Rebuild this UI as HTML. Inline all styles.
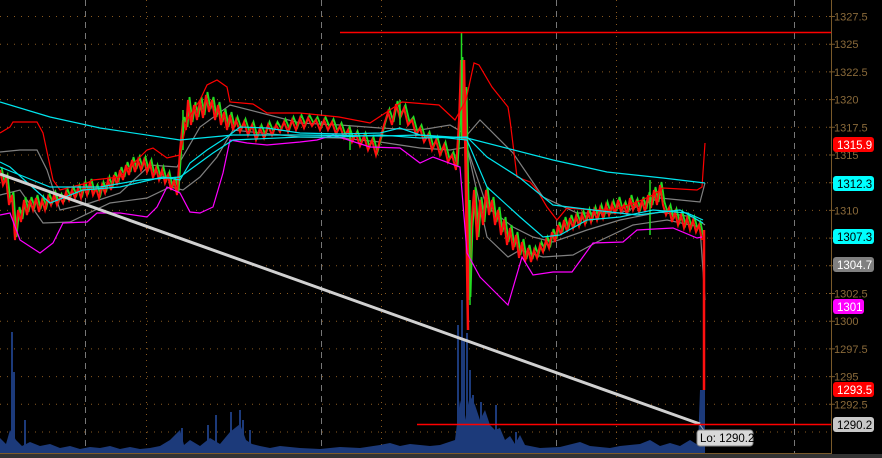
<!DOCTYPE html>
<html><head><meta charset="utf-8">
<style>
html,body{margin:0;padding:0;background:#000;width:882px;height:458px;overflow:hidden}
svg{display:block}
text{font-family:"Liberation Sans",sans-serif}
</style></head><body>
<svg width="882" height="458" xmlns="http://www.w3.org/2000/svg">
<defs>
<polyline id="pr" fill="none" points="0,170 3,185 6,178 9,205 12,195 15,240 18,210 21,222 24,200 27,215 30,200 33,210 36,198 39,212 42,200 45,210 48,197 51,205 54,195 57,205 60,197 63,203 66,192 69,200 72,190 75,198 78,188 81,198 84,185 87,195 90,182 93,195 96,188 99,198 102,185 105,193 108,180 111,190 114,175 117,185 120,170 123,180 126,165 129,175 132,160 135,172 138,160 141,170 144,160 147,172 150,163 153,178 156,168 159,180 162,170 165,183 168,175 171,190 174,180 177,195 180,150 183,120 186,130 188,100 191,125 194,105 197,120 200,100 203,118 206,95 209,112 212,100 215,120 218,105 221,125 224,112 227,130 230,115 233,130 236,120 240,132 244,122 248,135 252,125 256,140 260,128 264,138 268,125 272,135 276,125 280,132 284,122 288,132 292,120 296,130 300,118 304,128 308,118 312,126 316,120 320,130 324,120 328,130 332,122 336,134 340,126 344,138 348,130 352,142 356,134 360,146 364,136 368,150 372,140 376,155 380,140 384,125 388,112 392,125 396,104 400,118 404,108 408,125 412,120 416,135 420,128 424,142 428,135 432,150 436,140 440,155 444,145 448,162 452,155 456,170 459,120 461,60 463,140 465,90 467,200 469,300 471,230 474,190 477,240 480,200 483,225 486,190 489,215 492,200 495,225 498,210 501,235 504,220 507,245 510,228 513,250 516,235 519,258 522,242 525,262 528,248 531,262 534,250 537,258 540,245 543,252 546,240 549,248 552,232 555,242 558,225 561,235 564,220 567,232 570,218 573,228 576,216 579,226 582,214 585,224 588,212 591,222 594,210 597,220 600,208 603,218 606,205 609,215 612,204 615,214 618,200 621,212 624,205 627,215 630,198 633,210 636,202 639,212 642,200 645,212 648,195 651,208 654,190 657,205 660,185 663,205 666,215 669,208 672,222 675,212 678,225 681,215 684,228 687,218 690,230 693,220 696,232 699,225 702,240"/>
</defs>
<rect width="882" height="458" fill="#000"/>
<g fill="none">
<path d="M85.5 0V453M321.5 0V453M556.5 0V453M794.5 0V453" stroke="#777" stroke-dasharray="6,5"/>
<path d="M146.5 0V453M381.5 0V453M616.5 0V453" stroke="#8a5a20" stroke-dasharray="1,5"/>
<path d="M0 16.5H831M0 44.2H831M0 71.9H831M0 99.6H831M0 127.3H831M0 155H831M0 182.7H831M0 210.4H831M0 238.1H831M0 265.8H831M0 293.5H831M0 321.2H831M0 348.9H831M0 376.6H831M0 404.3H831M0 432H831" stroke="#8a5a20" stroke-dasharray="1,6"/>
</g>
<polygon fill="#1c3a7a" points="0,438 6,444 10,430 16,440 22,446 30,442 40,446 50,444 60,448 70,446 80,449 90,447 100,448 110,446 120,449 130,447 140,449 150,448 160,446 170,440 180,430 184,445 190,440 200,446 210,438 220,444 230,432 240,424 246,440 252,444 260,446 270,448 280,446 300,448 320,449 340,447 360,448 380,445 390,443 400,446 410,444 420,445 430,446 440,445 455,440 460,400 465,420 470,395 475,405 480,420 485,410 490,425 495,430 500,428 505,440 510,436 515,444 520,435 525,445 530,446 540,448 560,447 580,442 590,446 610,448 620,446 640,444 650,440 660,446 670,443 680,446 690,440 698,445 700,390 705,390 705,453 0,453"/>
<path stroke="#1c3a7a" stroke-width="2" d="M12 453V332M14 453V372M25 453V420M182 453V428M208 453V425M216 453V415M231 453V412M240 453V410M243 453V420M250 453V430M458 453V325M462 453V300M464 453V340M467 453V333M470 453V370M473 453V395M481 453V402M496 453V405M516 453V432"/>
<g fill="none" stroke-width="1.2">
<polyline stroke="#808080" points="0,152 20,150 37,150 47,170 60,210 90,203 120,193 150,165 177,167 200,127 230,105 300,123 340,125 380,128 420,130 450,125 467,135 480,120 513,153 543,197 577,213 620,213 660,198 700,202 705,183"/>
<polyline stroke="#808080" points="0,195 20,190 43,223 70,222 110,203 147,198 170,187 183,190 200,177 217,157 233,130 300,137 340,138 380,142 420,148 450,150 467,147 487,207 513,227 533,237 553,242 587,230 620,220 660,212 693,217 705,225"/>
<polyline stroke="#808080" points="467,147 487,237 508,257 520,250 543,257 573,255 597,242 633,225 667,220 700,227 705,300"/>
</g>
<use href="#pr" stroke="#22dd22" stroke-width="1.8" transform="translate(1.5,-3)"/>
<use href="#pr" stroke="#ff1010" stroke-width="2"/>
<path stroke="#22dd22" stroke-width="1.5" d="M461.5 33V140M470 200V305M183 110V150M350 130V150M400 100V125M650 180V235"/>
<path stroke="#ff1010" stroke-width="2.5" d="M464 60L468 330M704 230V390"/>
<g fill="none" stroke-width="1.2">
<polyline stroke="#ff0000" points="0,133 10,127 13,122 37,122 43,133 53,180 60,190 87,183 93,180 120,177 147,150 153,148 167,158 180,155 187,120 200,100 207,85 217,80 227,87 230,102 253,104 267,113 300,113 339,117 370,123 402,102 439,105 455,120 466,100 474,63 479,65 492,87 508,107 510,120 517,177 530,182 537,190 547,207 557,220 567,208 593,210 613,210 637,202 653,195 663,188 697,190 702,187 705,143"/>
<polyline stroke="#ff00ff" points="0,215 10,213 20,240 40,253 53,243 63,223 87,222 97,213 120,213 147,217 157,207 167,187 180,193 190,212 200,213 213,207 223,173 230,140 247,143 267,145 300,142 317,140 333,135 370,147 400,148 420,163 433,157 460,167 467,253 480,277 493,290 508,305 522,257 533,275 553,272 572,272 593,243 623,242 637,230 673,228 697,238 702,237"/>
<polyline stroke="#00e5ee" points="0,162 10,167 50,203 83,190 120,187 163,177 180,180 190,163 207,150 227,137 240,127 267,128 300,133 340,134 380,133 400,128 420,135 467,140 487,187 520,217 543,237 560,235 587,220 620,217 653,210 687,213 703,220"/>
<polyline stroke="#00e5ee" points="0,167 50,187 100,187 140,180 180,177 213,153 233,140 300,137 340,137 380,135 420,138 467,137 487,157 520,178 553,205 593,210 637,215 680,210 703,223"/>
<polyline stroke="#00e5ee" points="0,102 50,117 100,128 180,140 233,135 300,135 380,136 420,135 467,138 553,160 607,172 663,178 705,183"/>
</g>
<line x1="0" y1="174" x2="700" y2="424" stroke="#d0d0d0" stroke-width="3"/>
<line x1="340" y1="32.5" x2="831" y2="32.5" stroke="#ff0000" stroke-width="1.5"/>
<line x1="417" y1="424.5" x2="831" y2="424.5" stroke="#ff0000" stroke-width="1.5"/>
<line x1="831.5" y1="0" x2="831.5" y2="454" stroke="#7a5a2a"/>
<rect x="0" y="453" width="831" height="1" fill="#7a5a2a"/>
<rect x="0" y="454" width="882" height="4" fill="#333"/>
<path stroke="#7a5a2a" d="M829 16.5h6M829 44.2h6M829 71.9h6M829 99.6h6M829 127.3h6M829 155h6M829 182.7h6M829 210.4h6M829 238.1h6M829 265.8h6M829 293.5h6M829 321.2h6M829 348.9h6M829 376.6h6M829 404.3h6"/>
<g font-size="11" fill="#8a6a3a">
<text x="834" y="20.5">1327.5</text><text x="834" y="48.2">1325</text><text x="834" y="75.9">1322.5</text><text x="834" y="103.6">1320</text><text x="834" y="131.3">1317.5</text><text x="834" y="159">1315</text><text x="834" y="186.7">1312.5</text><text x="834" y="214.4">1310</text><text x="834" y="242.1">1307.5</text><text x="834" y="269.8">1305</text><text x="834" y="297.5">1302.5</text><text x="834" y="325.2">1300</text><text x="834" y="352.9">1297.5</text><text x="834" y="380.6">1295</text><text x="834" y="408.3">1292.5</text>
</g>
<g font-size="11.5">
<rect x="833" y="137" width="41" height="15" rx="3" fill="#ff0000"/><text x="837" y="149" fill="#fff">1315.9</text>
<rect x="833" y="176" width="41" height="15" rx="3" fill="#00ffff"/><text x="837" y="188" fill="#000">1312.3</text>
<rect x="833" y="229" width="41" height="15" rx="3" fill="#00ffff"/><text x="837" y="241" fill="#000">1307.3</text>
<rect x="833" y="257" width="41" height="15" rx="3" fill="#808080"/><text x="837" y="269" fill="#fff">1304.7</text>
<rect x="833" y="299" width="31" height="15" rx="3" fill="#ff00ff"/><text x="837" y="311" fill="#fff">1301</text>
<rect x="833" y="382" width="41" height="15" rx="3" fill="#ff0000"/><text x="837" y="394" fill="#fff">1293.5</text>
<rect x="833" y="417" width="41" height="15" rx="3" fill="#c8c8c8"/><text x="837" y="429" fill="#000">1290.2</text>
<line x1="700" y1="425" x2="706" y2="433" stroke="#aaa"/>
<rect x="697" y="430" width="56" height="16" rx="3" fill="#d8d8d8" stroke="#888"/><text x="700" y="442" fill="#000">Lo: 1290.2</text>
</g>
</svg>
</body></html>
